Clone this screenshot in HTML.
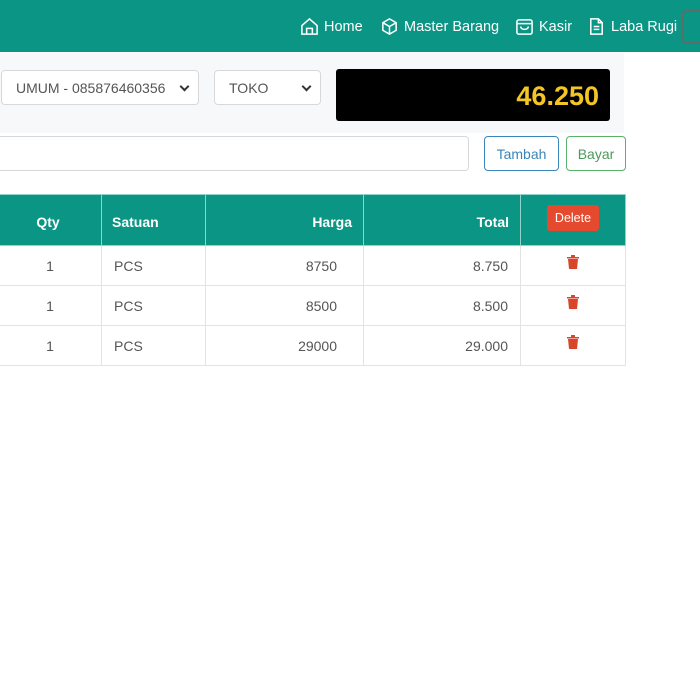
<!DOCTYPE html>
<html><head><style>
body{margin:0;width:700px;height:700px;background:#fff;font-family:"Liberation Sans",sans-serif;position:relative;overflow:hidden;color:#444}
.nav{position:absolute;left:0;top:0;width:700px;height:52px;background:#0b9584}
.ni{position:absolute;top:17px;color:#fff;font-size:14.5px;display:flex;align-items:center;gap:5px}
.ni svg{width:19px;height:19px;fill:none;stroke:#fff;stroke-width:1.6}
.panel{position:absolute;left:0;top:53px;width:624px;height:80px;background:#f7f8fa}
.sel{position:absolute;background:#fff;border:1px solid #d6d9dc;border-radius:4px;font-size:14px;color:#555;box-sizing:border-box;padding:9px 0 0 14px}
.sel:after{content:"";position:absolute;right:10px;top:12px;width:5px;height:5px;border-right:2px solid #333;border-bottom:2px solid #333;transform:rotate(45deg)}
.btn{position:absolute;border-radius:4px;font-size:14px;box-sizing:border-box;text-align:center;padding-top:9px;background:#fff}
table{position:absolute;left:-20px;top:194px;border-collapse:collapse;font-size:14px;table-layout:fixed;width:645px}
th{background:#0b9584;color:#fff;height:51px;border:1px solid #8fd3ca;font-weight:bold;padding:4px 0 0 0;box-sizing:border-box}
td{height:40px;border:1px solid #e3e3e3;color:#555;padding:0;box-sizing:border-box}
.tr{text-align:center;vertical-align:top;padding-top:9px}
</style></head><body>
<div class="nav">
<div class="ni" style="left:300px"><svg viewBox="0 0 20 20"><path d="M2 9L10 2l8 7v9H2z M7 18v-6h6v6"/></svg>Home</div>
<div class="ni" style="left:380px"><svg viewBox="0 0 20 20"><path d="M10 2l7 4v8l-7 4-7-4V6z M3 6l7 4 7-4 M10 10v8"/></svg>Master Barang</div>
<div class="ni" style="left:515px"><svg viewBox="0 0 20 20"><rect x="2" y="3" width="16" height="15" rx="2"/><path d="M2 7h16 M6 10c0 4 8 4 8 0"/></svg>Kasir</div>
<div class="ni" style="left:587px"><svg viewBox="0 0 20 20"><path d="M4 2h8l4 4v12H4z M12 2v4h4 M7 10h6 M7 13h6"/></svg>Laba Rugi</div>
<div style="position:absolute;left:682px;top:10px;width:30px;height:34px;border:2px solid #5d6d6a;border-radius:4px;box-sizing:border-box"></div>
</div>
<div class="panel"></div>
<div class="sel" style="left:1px;top:70px;width:198px;height:35px">UMUM - 085876460356</div>
<div class="sel" style="left:214px;top:70px;width:107px;height:35px">TOKO</div>
<div style="position:absolute;left:336px;top:69px;width:274px;height:52px;background:#000;border-radius:3px;color:#f3c623;font-weight:bold;font-size:27px;text-align:right;box-sizing:border-box;padding:12px 11px 0 0">46.250</div>
<div style="position:absolute;left:-5px;top:136px;width:474px;height:35px;background:#fff;border:1px solid #d6d9dc;border-radius:4px;box-sizing:border-box"></div>
<div class="btn" style="left:484px;top:136px;width:75px;height:35px;border:1px solid #3a86b8;color:#3a86b8">Tambah</div>
<div class="btn" style="left:566px;top:136px;width:60px;height:35px;border:1px solid #5ab26a;color:#4a9a5a">Bayar</div>
<table>
<colgroup><col style="width:121px"><col style="width:104px"><col style="width:158px"><col style="width:157px"><col style="width:105px"></colgroup>
<tr><th style="text-align:center;padding-left:14px">Qty</th><th style="text-align:left;padding-left:10px">Satuan</th><th style="text-align:right;padding-right:11px">Harga</th><th style="text-align:right;padding-right:11px">Total</th><th style="padding-top:0"><span style="background:#e54a2e;color:#fff;font-weight:normal;font-size:12.5px;padding:6px 8px;border-radius:3px;position:relative;top:-3px">Delete</span></th></tr>
<tr><td style="text-align:center;padding-left:18px">1</td><td style="padding-left:12px">PCS</td><td style="text-align:right;padding-right:26px">8750</td><td style="text-align:right;padding-right:12px">8.750</td><td class="tr"><svg width="12" height="14" viewBox="0 0 12 14"><path d="M0 2h12v1.5H0z M4 0h4v2H4z M1 4h10l-1 10H2z" fill="#d9452b"/></svg></td></tr>
<tr><td style="text-align:center;padding-left:18px">1</td><td style="padding-left:12px">PCS</td><td style="text-align:right;padding-right:26px">8500</td><td style="text-align:right;padding-right:12px">8.500</td><td class="tr"><svg width="12" height="14" viewBox="0 0 12 14"><path d="M0 2h12v1.5H0z M4 0h4v2H4z M1 4h10l-1 10H2z" fill="#d9452b"/></svg></td></tr>
<tr><td style="text-align:center;padding-left:18px">1</td><td style="padding-left:12px">PCS</td><td style="text-align:right;padding-right:26px">29000</td><td style="text-align:right;padding-right:12px">29.000</td><td class="tr"><svg width="12" height="14" viewBox="0 0 12 14"><path d="M0 2h12v1.5H0z M4 0h4v2H4z M1 4h10l-1 10H2z" fill="#d9452b"/></svg></td></tr>
</table>
</body></html>
